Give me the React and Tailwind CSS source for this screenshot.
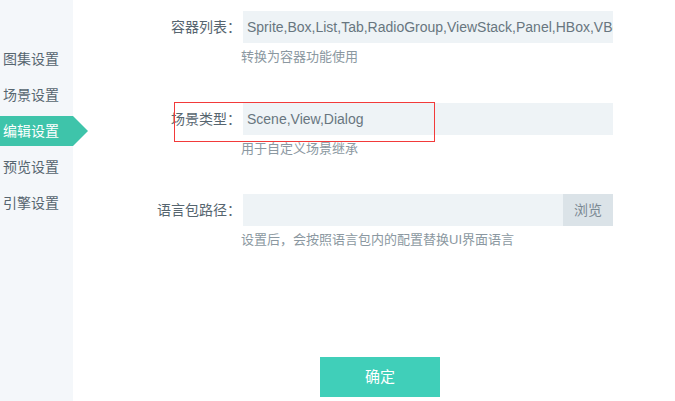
import React from 'react';

const menu = ['图集设置', '场景设置', '编辑设置', '预览设置', '引擎设置'];

const font = { fontFamily: '"Liberation Sans", "Noto Sans CJK SC", sans-serif' };

const Field = ({ label, value, hint, browse }) => (
  <div>
    <div className="flex items-center h-8">
      <div className="w-[170px] text-right text-[14px] text-[#56656f] pr-0.5 whitespace-nowrap">{label}</div>
      <div className="flex w-[370px] h-8 bg-[#eef3f6]">
        <div className="flex-1 overflow-hidden whitespace-nowrap px-1 leading-8 text-[14px] text-[#68767f]">{value}</div>
        {browse && (
          <div className="w-[50px] h-8 bg-[#dbe3e8] text-[#7b8993] text-[14px] leading-8 text-center">浏览</div>
        )}
      </div>
    </div>
    <div className="pl-[168px] mt-1.5 text-[13px] leading-4 text-[#8b98a1]">{hint}</div>
  </div>
);

const App = () => {
  return (
    <div className="flex w-[675px] h-[401px] bg-white overflow-hidden relative" style={font}>
      <div className="w-[73px] h-full bg-[#f4f7fa] pt-[44px] shrink-0">
        {menu.map((m, i) => (
          <div key={m} className="relative h-[30px] mb-1.5 leading-[30px] text-[14px] pl-[3px]">
            {i === 2 ? (
              <>
                <div className="absolute inset-0 w-[73px] bg-[#3ec4aa]" />
                <div className="absolute left-[73px] top-0 w-0 h-0 border-t-[15px] border-b-[15px] border-l-[15px] border-t-transparent border-b-transparent border-l-[#3ec4aa]" />
                <span className="relative text-white">{m}</span>
              </>
            ) : (
              <span className="text-[#56656f]">{m}</span>
            )}
          </div>
        ))}
      </div>
      <div className="flex-1 pt-[11px]">
        <Field label="容器列表：" value="Sprite,Box,List,Tab,RadioGroup,ViewStack,Panel,HBox,VBox" hint="转换为容器功能使用" />
        <div className="h-[38px]" />
        <Field label="场景类型：" value="Scene,View,Dialog" hint="用于自定义场景继承" />
        <div className="h-[37px]" />
        <Field label="语言包路径：" value="" hint="设置后，会按照语言包内的配置替换UI界面语言" browse />
        <div className="ml-[247px] mt-[109px] w-[120px] h-[40px] bg-[#40cfb9] text-white text-[15px] leading-[40px] text-center">确定</div>
      </div>
      <div className="absolute left-[174px] top-[102px] w-[261px] h-[40px] border border-[#f23a3a] pointer-events-none" />
    </div>
  );
};

export default App;
